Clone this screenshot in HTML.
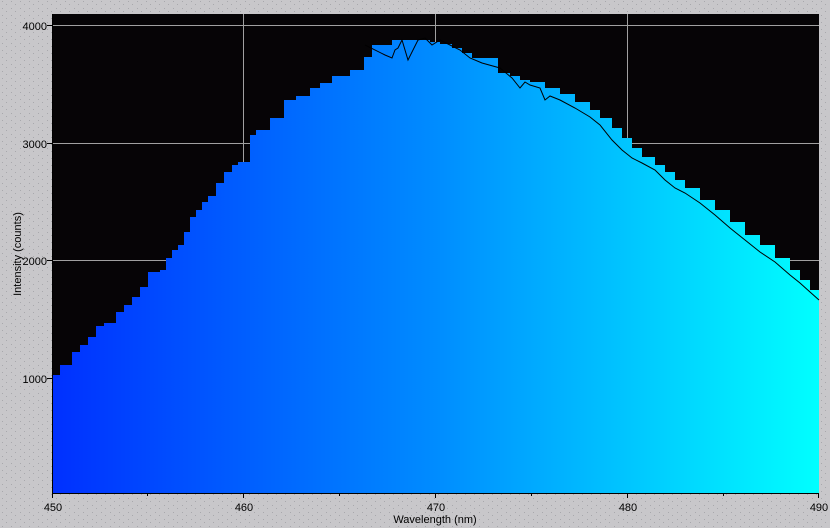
<!DOCTYPE html>
<html><head><meta charset="utf-8"><style>
html,body{margin:0;padding:0;background:#c6c5c8;}
svg{display:block;font-family:"Liberation Sans",sans-serif;}
</style></head><body>
<svg width="830" height="528" viewBox="0 0 830 528" xmlns="http://www.w3.org/2000/svg">
<defs>
<linearGradient id="g" x1="52" y1="0" x2="819" y2="0" gradientUnits="userSpaceOnUse">
<stop offset="0" stop-color="#0030ff"/>
<stop offset="0.5" stop-color="#008cff"/>
<stop offset="1" stop-color="#00ffff"/>
</linearGradient>
<pattern id="dots" width="9" height="7" patternUnits="userSpaceOnUse">
<rect x="2" y="1" width="1" height="1" fill="#a8a8ac"/>
<rect x="6" y="4" width="1" height="1" fill="#a8a8ac"/>
</pattern>
</defs>
<rect width="830" height="528" fill="#c8c7ca"/>
<rect width="830" height="528" fill="url(#dots)"/>
<rect x="52" y="14" width="767" height="479" fill="#060406"/>
<g stroke="#a0a0a0" stroke-width="1">
<line x1="52" y1="25.5" x2="819" y2="25.5"/>
<line x1="52" y1="143.5" x2="819" y2="143.5"/>
<line x1="52" y1="260.5" x2="819" y2="260.5"/>
<line x1="52" y1="378.5" x2="819" y2="378.5"/>
<line x1="243.5" y1="14" x2="243.5" y2="493"/>
<line x1="435.5" y1="14" x2="435.5" y2="493"/>
<line x1="627.5" y1="14" x2="627.5" y2="493"/>
</g>
<path fill="url(#g)" d="M52 493 V375 H60 V365 H72 V352 H80 V345 H88 V337 H96 V326 H104 V323 H116 V312 H124 V305 H132 V297 H140 V287 H148 V272 H160 V270 H166 V258 H172 V250 H178 V245 H184 V232 H190 V217 H196 V210 H202 V202 H208 V196 H216 V183 H224 V172 H232 V165 H238 V162 H250 V135 H256 V130 H270 V118 H284 V100 H296 V96 H310 V88 H320 V83 H332 V76 H350 V70 H364 V57 H372 V45 H392 V40 H430 V42 H440 V44 H452 V48 H462 V53 H472 V58 H482 V58 H498 V73 H510 V76 H520 V80 H530 V82 H545 V88 H560 V94 H575 V102 H590 V110 H600 V118 H612 V128 H622 V138 H632 V148 H642 V157 H655 V165 H665 V172 H675 V180 H685 V188 H700 V200 H715 V210 H730 V222 H745 V235 H760 V245 H775 V258 H790 V270 H800 V280 H810 V290 H819 V493 Z"/>
<polyline fill="none" stroke="#000" stroke-width="1" points="365,45 385,55 392,58 395,50 398,48 402,40 408,60 418,40 425,38 432,45 440,40 450,45 460,50 470,58 482,63 500,68 512,78 520,88 525,82 530,85 540,88 545,100 550,96 560,100 575,108 590,117 600,125 612,140 622,150 632,158 642,163 655,170 665,180 675,188 685,193 700,203 715,215 730,228 745,240 760,252 775,262 790,275 800,283 810,292 819,300"/>
<g stroke="#000" stroke-width="1">
<line x1="52.5" y1="14" x2="52.5" y2="493"/>
<line x1="52" y1="493.5" x2="819" y2="493.5"/>
<line x1="47" y1="25.5" x2="52" y2="25.5"/>
<line x1="47" y1="143.5" x2="52" y2="143.5"/>
<line x1="47" y1="260.5" x2="52" y2="260.5"/>
<line x1="47" y1="378.5" x2="52" y2="378.5"/>
<line x1="52.5" y1="493" x2="52.5" y2="498"/>
<line x1="147.5" y1="493" x2="147.5" y2="496"/>
<line x1="243.5" y1="493" x2="243.5" y2="498"/>
<line x1="339.5" y1="493" x2="339.5" y2="496"/>
<line x1="435.5" y1="493" x2="435.5" y2="498"/>
<line x1="531.5" y1="493" x2="531.5" y2="496"/>
<line x1="627.5" y1="493" x2="627.5" y2="498"/>
<line x1="723.5" y1="493" x2="723.5" y2="496"/>
<line x1="818.5" y1="493" x2="818.5" y2="498"/>
</g>
<g font-size="11" fill="#000" text-anchor="end">
<text x="47" y="30">4000</text>
<text x="47" y="148">3000</text>
<text x="47" y="265">2000</text>
<text x="47" y="383">1000</text>
</g>
<g font-size="11" fill="#000" text-anchor="middle">
<text x="53" y="511">450</text>
<text x="244" y="511">460</text>
<text x="436" y="511">470</text>
<text x="628" y="511">480</text>
<text x="819" y="511">490</text>
<text x="435" y="523">Wavelength (nm)</text>
<text transform="translate(21,254) rotate(-90)">Intensity (counts)</text>
</g>
</svg>
</body></html>
